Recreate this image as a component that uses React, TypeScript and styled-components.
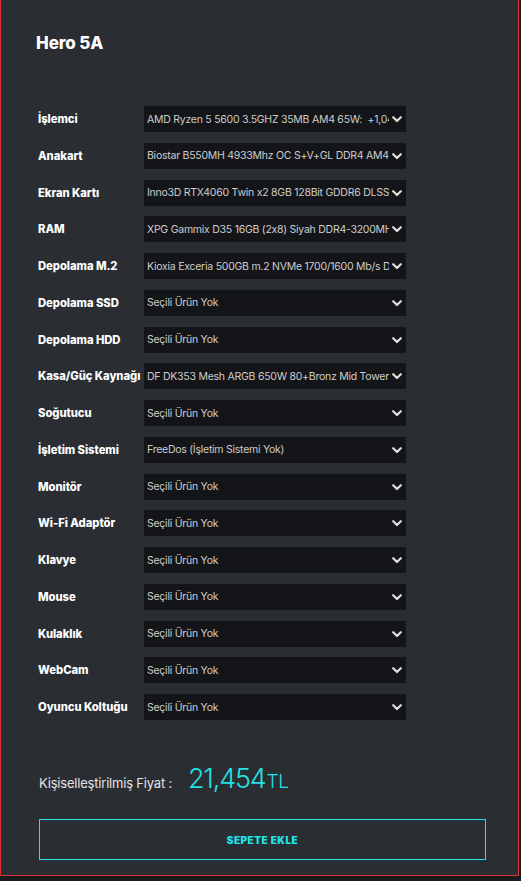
import React from "react";
import styled, { createGlobalStyle } from "styled-components";

const GlobalStyle = createGlobalStyle`
  html, body {
    margin: 0;
    padding: 0;
    background: #1b1c20;
  }
  body {
    font-family: Inter, "Noto Sans", "DejaVu Sans", sans-serif;
    -webkit-font-smoothing: antialiased;
  }
`;

const Card = styled.section`
  box-sizing: border-box;
  width: 519px;
  height: 876px;
  background: #2a2d32;
  border: 1px solid #d9342f;
  border-top: none;
  padding: 32px 0 0 37px;
  display: flex;
  flex-direction: column;
`;

const Title = styled.h2`
  margin: 0 0 0 -2px;
  font-size: 17px;
  line-height: 22px;
  font-weight: 800;
  color: #ffffff;
  letter-spacing: -0.1px;
`;

const Options = styled.div`
  margin-top: 52px;
  display: grid;
  grid-template-columns: 106px 262px;
  grid-auto-rows: 26px;
  row-gap: 10.75px;
  align-items: center;
`;

const Label = styled.label`
  font-size: 11.25px;
  font-weight: 800;
  color: #ffffff;
  white-space: nowrap;
  letter-spacing: -0.05px;
`;

const SelectWrap = styled.div`
  position: relative;
  height: 26px;
`;

const Select = styled.select`
  appearance: none;
  -webkit-appearance: none;
  box-sizing: border-box;
  width: 100%;
  height: 100%;
  margin: 0;
  border: none;
  border-radius: 0;
  outline: none;
  background: #141518;
  color: #cdcdcd;
  font-family: Inter, "Noto Sans", sans-serif;
  font-size: 10.5px;
  padding: 0 17px 0 3px;
  letter-spacing: -0.25px;
`;

const Chevron = styled.svg`
  position: absolute;
  right: 4px;
  top: 50%;
  width: 10px;
  height: 7px;
  margin-top: -3px;
  pointer-events: none;
`;

const PriceRow = styled.div`
  margin-top: 42px;
  display: flex;
  align-items: baseline;
  height: 30px;
  padding-left: 1px;
`;

const PriceLabel = styled.span`
  font-size: 13px;
  color: #e4e4e4;
  margin-right: 16px;
  letter-spacing: -0.2px;
`;

const PriceValue = styled.span`
  font-size: 27px;
  font-weight: 300;
  color: #22e2e6;
  letter-spacing: -1.2px;
`;

const Currency = styled.span`
  font-size: 19px;
  font-weight: 300;
  color: #22e2e6;
  margin-left: 1px;
  letter-spacing: -0.5px;
`;

const AddButton = styled.button`
  margin: 27px 0 0 1px;
  width: 447px;
  height: 41px;
  box-sizing: border-box;
  background: transparent;
  border: 1px solid #22e2e6;
  color: #22e2e6;
  font-family: Inter, "Noto Sans", sans-serif;
  font-size: 10px;
  font-weight: 900;
  letter-spacing: 0.5px;
  cursor: pointer;
`;

const parts: [string, string][] = [
  ["İşlemci", "AMD Ryzen 5 5600 3.5GHZ 35MB AM4 65W:\u00a0\u00a0+1,049 TL"],
  ["Anakart", "Biostar B550MH 4933Mhz OC S+V+GL DDR4 AM4 \u00a0\u00a0\u00a0\u00a0+2,599 TL"],
  ["Ekran Kartı", "Inno3D RTX4060 Twin x2 8GB 128Bit GDDR6 DLSS 3"],
  ["RAM", "XPG Gammix D35 16GB (2x8) Siyah DDR4-3200MHz"],
  ["Depolama M.2", "Kioxia Exceria 500GB m.2 NVMe 1700/1600 Mb/s Dahili SSD"],
  ["Depolama SSD", "Seçili Ürün Yok"],
  ["Depolama HDD", "Seçili Ürün Yok"],
  ["Kasa/Güç Kaynağı", "DF DK353 Mesh ARGB 650W 80+Bronz Mid Tower \u00a0\u00a0\u00a0Kasa"],
  ["Soğutucu", "Seçili Ürün Yok"],
  ["İşletim Sistemi", "FreeDos (İşletim Sistemi Yok)"],
  ["Monitör", "Seçili Ürün Yok"],
  ["Wi-Fi Adaptör", "Seçili Ürün Yok"],
  ["Klavye", "Seçili Ürün Yok"],
  ["Mouse", "Seçili Ürün Yok"],
  ["Kulaklık", "Seçili Ürün Yok"],
  ["WebCam", "Seçili Ürün Yok"],
  ["Oyuncu Koltuğu", "Seçili Ürün Yok"],
];

export default function App() {
  return (
    <>
      <GlobalStyle />
      <Card>
        <Title>Hero 5A</Title>
        <Options>
          {parts.map(([label, value], i) => (
            <React.Fragment key={label}>
              <Label htmlFor={`part-${i}`}>{label}</Label>
              <SelectWrap>
                <Select id={`part-${i}`} defaultValue={value}>
                  <option value={value}>{value}</option>
                </Select>
                <Chevron viewBox="0 0 10 7">
                  <polyline
                    points="1.2,1.2 5,5 8.8,1.2"
                    fill="none"
                    stroke="#dedede"
                    strokeWidth="2.2"
                    strokeLinecap="round"
                    strokeLinejoin="round"
                  />
                </Chevron>
              </SelectWrap>
            </React.Fragment>
          ))}
        </Options>
        <PriceRow>
          <PriceLabel>Kişiselleştirilmiş Fiyat :</PriceLabel>
          <PriceValue>21,454</PriceValue>
          <Currency>TL</Currency>
        </PriceRow>
        <AddButton type="button">SEPETE EKLE</AddButton>
      </Card>
    </>
  );
}
